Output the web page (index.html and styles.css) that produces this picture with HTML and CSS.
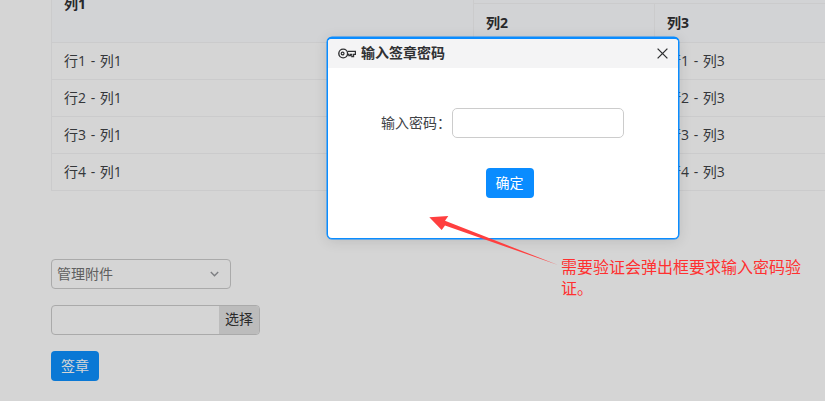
FILE: index.html
```html
<!DOCTYPE html>
<html lang="zh-CN">
<head>
<meta charset="utf-8">
<title>签章</title>
<link rel="stylesheet" href="styles.css">
</head>
<body>
<main class="page">
  <table class="grid">
    <colgroup><col class="c1"><col class="c2"><col class="c3"></colgroup>
    <thead>
      <tr class="head-top"><th rowspan="2">列1</th><th colspan="2"></th></tr>
      <tr class="head-sub"><th>列2</th><th>列3</th></tr>
    </thead>
    <tbody>
      <tr><td>行1 - 列1</td><td>行1 - 列2</td><td>行1 - 列3</td></tr>
      <tr><td>行2 - 列1</td><td>行2 - 列2</td><td>行2 - 列3</td></tr>
      <tr><td>行3 - 列1</td><td>行3 - 列2</td><td>行3 - 列3</td></tr>
      <tr><td>行4 - 列1</td><td>行4 - 列2</td><td>行4 - 列3</td></tr>
    </tbody>
  </table>
  <div class="form">
    <div class="select"><span>管理附件</span>
      <svg class="chev" width="9" height="6" viewBox="0 0 9 6"><path d="M.8 1l3.7 3.7L8.200 1" fill="none" stroke="#96989c" stroke-width="1.4"/></svg>
    </div>
    <div class="file"><span class="file-name"></span><span class="file-btn">选择</span></div>
    <button class="sign">签章</button>
  </div>
</main>
<div class="overlay"></div>
<section class="dialog">
  <header class="dialog-head">
    <svg class="key" width="18" height="11" viewBox="0 0 18 11"><circle cx="5.2" cy="5.5" r="4.400" fill="none" stroke="#303133" stroke-width="1.4"/><circle cx="4.600" cy="5.5" r="1.4" fill="none" stroke="#303133" stroke-width="1.2"/><path d="M9.600 3.400H17.400V6.400H15.600V8.600H13.800V6.400H12.400V7.600H10.800V6.400H9.600" fill="none" stroke="#303133" stroke-width="1.2"/></svg>
    <h2 class="dialog-title">输入签章密码</h2>
    <svg class="close" width="11" height="11" viewBox="0 0 11 11"><path d="M.6.6l9.800 9.800M10.400.6L.6 10.400" stroke="#303133" stroke-width="1.3" fill="none"/></svg>
  </header>
  <div class="dialog-body">
    <div class="field"><label class="field-label">输入密码：</label><span class="field-input"></span></div>
    <button class="ok">确定</button>
  </div>
</section>
<svg class="arrow" width="140" height="60" viewBox="0 0 140 60"><polygon points="0.3,7.3 19.3,6 16,10.700 129,55 16,15.500 12.700,20" fill="#ff3f3f"/></svg>
<p class="note">需要验证会弹出框要求输入密码验证。</p>
</body>
</html>
```
FILE: styles.css
```css
* { box-sizing: border-box; }
html, body { margin: 0; height: 401px; overflow: hidden; }
body {
  position: relative;
  background: #fff;
  font-family: "Open Sans", "Noto Sans CJK SC", sans-serif;
  font-size: 14px;
  color: #303133;
}
.page { margin-top: -33px; padding-left: 51px; width: 825px; }
.grid { border-collapse: collapse; table-layout: fixed; width: 774px; }
.c1 { width: 422px; }
.c2 { width: 181px; }
.c3 { width: 171px; }
.grid th, .grid td {
  border: 1px solid #f3f3f5;
  padding: 0 12px 1px;
  text-align: left;
  line-height: 20px;
}
.grid th { background: #fcfdff; font-weight: 700; }
.grid th[rowspan] { padding-bottom: 2px; }
.grid td { height: 37px; color: #404246; word-spacing: 1px; }
.head-top { height: 36px; }
.head-sub { height: 39px; }
.form { margin-top: 68px; display: flex; flex-direction: column; align-items: flex-start; }
.select {
  width: 180px; height: 30px; padding: 0 11px 2px 5px;
  border: 1px solid #ccc; border-radius: 4px;
  display: flex; align-items: center; justify-content: space-between;
  color: #727272;
}
.chev { margin-top: 2px; }
.file {
  margin-top: 16px; width: 209px; height: 30px;
  border: 1px solid #ccc; border-radius: 4px; overflow: hidden;
  display: flex;
}
.file-name { flex: 1; }
.file-btn { width: 40px; background: #e2e2e2; text-align: center; line-height: 26px; color: #333; }
.sign, .ok {
  width: 48px; height: 30px; padding: 0 0 2px; border: 0; border-radius: 4px;
  font: inherit; color: #fff;
}
.sign { margin-top: 16px; background: #0c90ff; }
.overlay { position: absolute; inset: 0; background: rgba(0, 0, 0, .165); }
.dialog {
  position: absolute; left: 327px; top: 37px; width: 352px; height: 202px;
  background: #fff; border: 1px solid #0a8cff; border-top-width: 2px; border-radius: 5px;
  box-shadow: 0 0 0 .5px #0a8cff, 0 2px 14px rgba(0, 0, 0, .12);
  overflow: hidden;
}
.dialog-head {
  height: 29px; background: #f4f4f5; padding: 0 10px 1px;
  display: flex; align-items: center;
}
.key { margin-right: 5px; flex: none; }
.dialog-title { margin: 0; flex: 1; font-size: 14px; font-weight: 700; line-height: 20px; }
.close { flex: none; }
.dialog-body { display: flex; flex-direction: column; align-items: center; padding-top: 40px; }
.field { display: flex; align-items: center; margin-left: -1px; }
.field-label { width: 71px; color: #404246; padding-bottom: 2px; }
.field-input { width: 172px; height: 30px; border: 1px solid #ccc; border-radius: 5px; background: #fff; }
.ok { margin-top: 30px; background: #0a8cff; margin-left: 13px; }
.arrow { position: absolute; left: 429px; top: 210px; }
.note {
  position: absolute; left: 561px; top: 257px; width: 250px; margin: 0;
  font-size: 16px; line-height: 21px; color: #ff3030;
}
```
